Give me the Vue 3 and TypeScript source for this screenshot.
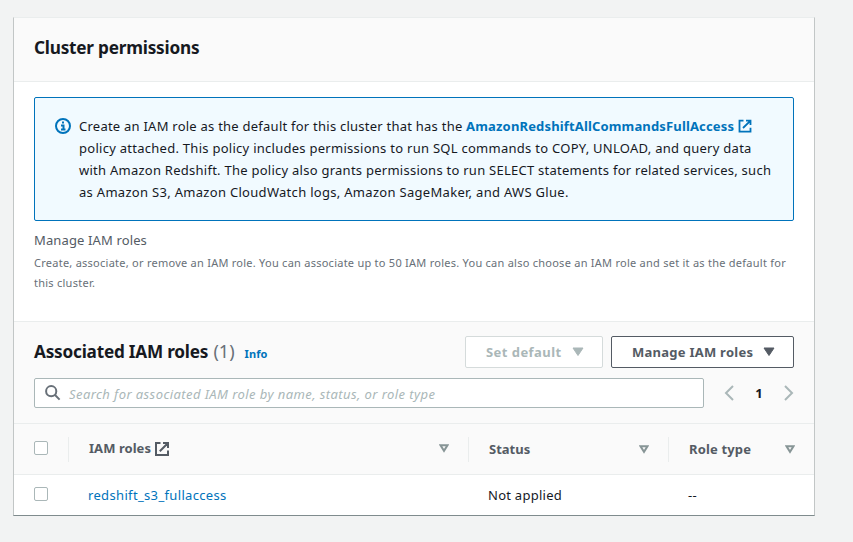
<script setup lang="ts">
import { ref } from 'vue'

interface Role {
  name: string
  status: string
  type: string
}

const roles: Role[] = [{ name: 'redshift_s3_fullaccess', status: 'Not applied', type: '--' }]
const query = ref('')
const page = ref(1)
</script>

<template>
  <main class="card">
    <header class="card-header">
      <h2 class="title">Cluster permissions</h2>
    </header>

    <section class="body">
      <div class="alert">
        <svg class="info-icon" width="16" height="16" viewBox="0 0 16 16" fill="none" stroke="#0073bb" stroke-width="2">
          <circle cx="8" cy="8" r="7" />
          <path d="M6 7.5h2.5V12M6 11.5h4.5M7 4.5h2" />
        </svg>
        <p class="alert-text">
          <span class="line l1">Create an IAM role as the default for this cluster that has the <a class="policy">AmazonRedshiftAllCommandsFullAccess</a><svg class="ext" width="14" height="14" viewBox="0 0 14 14" fill="none" stroke="currentColor" stroke-width="1.8"><path d="M5.5 1.6H1.5v11h11V8.8M8 1.6h4.5v4.5M12.3 1.8 5 9" /></svg></span>
          <span class="line l2">policy attached. This policy includes permissions to run SQL commands to COPY, UNLOAD, and query data</span>
          <span class="line l3">with Amazon Redshift. The policy also grants permissions to run SELECT statements for related services, such</span>
          <span class="line l4">as Amazon S3, Amazon CloudWatch logs, Amazon SageMaker, and AWS Glue.</span>
        </p>
      </div>
      <div class="label">Manage IAM roles</div>
      <p class="description">
        Create, associate, or remove an IAM role. You can associate up to 50 IAM roles. You can also choose an IAM role and set it as the default for<br />this cluster.
      </p>
    </section>

    <section class="toolbar">
      <div class="heading-row">
        <h2 class="title roles-title">Associated IAM roles <span class="count">(1)</span></h2>
        <a class="info">Info</a>
        <div class="actions">
          <button class="btn set" disabled>
            <span>Set default</span>
            <svg width="12" height="10" viewBox="0 0 12 10"><path d="M1 1h10L6 8.5z" fill="currentColor" stroke="currentColor" stroke-linejoin="round" /></svg>
          </button>
          <button class="btn manage">
            <span>Manage IAM roles</span>
            <svg width="12" height="10" viewBox="0 0 12 10"><path d="M1 1h10L6 8.5z" fill="currentColor" stroke="currentColor" stroke-linejoin="round" /></svg>
          </button>
        </div>
      </div>
      <div class="search-row">
        <label class="search">
          <svg width="16" height="16" viewBox="0 0 16 16" fill="none" stroke="#687078" stroke-width="2">
            <circle cx="6.2" cy="6.2" r="5.1" />
            <path d="m9.8 9.8 4.8 4.8" />
          </svg>
          <input v-model="query" placeholder="Search for associated IAM role by name, status, or role type" />
        </label>
        <nav class="pager">
          <svg width="10" height="16" viewBox="0 0 10 16" fill="none" stroke="#aab7b8" stroke-width="2"><path d="M9 1 2 8l7 7" /></svg>
          <span>{{ page }}</span>
          <svg width="10" height="16" viewBox="0 0 10 16" fill="none" stroke="#aab7b8" stroke-width="2"><path d="m1 1 7 7-7 7" /></svg>
        </nav>
      </div>
    </section>

    <div class="grid head">
      <div class="cell check"><span class="box"></span></div>
      <div class="cell first">
        <span class="roles-label">IAM roles</span>
        <svg class="ext-head" width="14" height="14" viewBox="0 0 14 14" fill="none" stroke="currentColor" stroke-width="2"><path d="M5.5 1H1v12h12V8.5M8 1h5v5M13 1 4.8 9.2" /></svg>
        <svg class="sort" width="10" height="9" viewBox="0 0 10 9"><path d="M1.5 1.2h7L5 6.8z" fill="none" stroke="#879596" stroke-width="2" /></svg>
      </div>
      <div class="cell second">
        <span>Status</span>
        <svg class="sort" width="10" height="9" viewBox="0 0 10 9"><path d="M1.5 1.2h7L5 6.8z" fill="none" stroke="#879596" stroke-width="2" /></svg>
      </div>
      <div class="cell third">
        <span class="type-label">Role type</span>
        <svg class="sort" width="10" height="9" viewBox="0 0 10 9"><path d="M1.5 1.2h7L5 6.8z" fill="none" stroke="#879596" stroke-width="2" /></svg>
      </div>
    </div>
    <div v-for="role in roles" :key="role.name" class="grid row">
      <div class="cell check"><span class="box"></span></div>
      <div class="cell"><a class="role-link">{{ role.name }}</a></div>
      <div class="cell">{{ role.status }}</div>
      <div class="cell">{{ role.type }}</div>
    </div>
  </main>
</template>

<style>
body {
  background: #f2f3f3;
}
</style>

<style scoped>
* {
  box-sizing: border-box;
}
.card {
  width: 802px;
  margin: 17px 0 0 13px;
  border: 1px solid #c2c6c6;
  border-top-color: #eaeded;
  border-bottom-color: #7f8b8d;
  background: #fff;
  color: #16191f;
  font: 13px/22px 'Noto Sans', sans-serif;
  box-shadow: 0 1px 0 #d5dada;
}
svg {
  flex: none;
  display: block;
}
.title {
  margin: 0;
  font-size: 17.2px;
  font-weight: 700;
  letter-spacing: -0.22px;
  white-space: pre;
}
.card-header {
  height: 64px;
  padding: 19px 20px 0;
  background: #fafafa;
  border-bottom: 1px solid #eaeded;
}
.body {
  height: 239px;
  padding: 15px 20px 0;
}
.alert {
  display: flex;
  height: 124px;
  padding: 17px 20px;
  border: 1px solid #0073bb;
  border-radius: 2px;
  background: #f1faff;
}
.info-icon {
  margin: 3px 8px 0 0;
}
.alert-text {
  margin: 0;
  white-space: nowrap;
}
.line {
  display: block;
  height: 22px;
}
.l1 {
  display: flex;
  white-space: pre;
  letter-spacing: 0.24px;
}
.l2 {
  letter-spacing: 0.27px;
}
.l3 {
  letter-spacing: 0.254px;
}
.l4 {
  letter-spacing: 0.3px;
}
.policy {
  font-weight: 700;
  color: #0073bb;
  letter-spacing: 0.155px;
}
.ext {
  margin: 4px 0 0 4px;
  color: #0073bb;
}
.label {
  margin-top: 8px;
  color: #545b64;
  letter-spacing: 0.13px;
}
.description {
  margin: 2px 0 0;
  font-size: 11px;
  line-height: 20px;
  letter-spacing: 0.253px;
  color: #687078;
  white-space: nowrap;
}
.toolbar {
  height: 103px;
  padding: 14px 20px 0;
  background: #fafafa;
  border-top: 1px solid #eaeded;
  border-bottom: 1px solid #eaeded;
}
.heading-row {
  display: flex;
  align-items: center;
  height: 32px;
}
.roles-title {
  margin-bottom: 2px;
}
.count {
  margin-left: 1px;
  font-size: 18px;
  font-weight: 400;
  color: #687078;
  letter-spacing: 0;
}
.info {
  margin: 4px 0 0 10px;
  font-size: 11px;
  font-weight: 700;
  color: #0073bb;
  letter-spacing: 0.1px;
}
.actions {
  display: flex;
  gap: 8px;
  margin-left: auto;
}
.btn {
  display: flex;
  align-items: center;
  justify-content: space-between;
  height: 32px;
  padding: 0 18px 0 20px;
  border: 1px solid #545b64;
  border-radius: 2px;
  background: #fff;
  font: 700 13px/22px 'Noto Sans', sans-serif;
  color: #545b64;
}
.set {
  width: 138px;
  border-color: #d5dbdb;
  color: #aab7b8;
  letter-spacing: 0.45px;
}
.manage {
  width: 183px;
  letter-spacing: 0.25px;
}
.search-row {
  display: flex;
  align-items: center;
  justify-content: space-between;
  margin-top: 10px;
}
.search {
  display: flex;
  align-items: center;
  gap: 8px;
  width: 670px;
  height: 30px;
  padding: 0 10px;
  border: 1px solid #aab7b8;
  border-radius: 2px;
  background: #fff;
}
.search input {
  flex: 1;
  height: 22px;
  margin-top: 2px;
  padding: 0;
  border: 0;
  outline: 0;
  background: none;
  font: 13px/22px 'Noto Sans', sans-serif;
  letter-spacing: 0.42px;
}
.search input::placeholder {
  color: #aab7b8;
  font-style: italic;
}
.pager {
  display: flex;
  align-items: center;
  justify-content: space-between;
  width: 70px;
  font-weight: 700;
}
.grid {
  display: grid;
  grid-template-columns: 54px 400px 200px 146px;
  align-items: center;
}
.head {
  height: 51px;
  background: #fafafa;
  border-bottom: 1px solid #eaeded;
  font-weight: 700;
  color: #545b64;
}
.row {
  height: 40px;
}
.cell {
  display: flex;
  align-items: center;
  padding-left: 20px;
  letter-spacing: 0.26px;
}
.head .cell {
  height: 25px;
  letter-spacing: 0;
}
.head .cell + .cell {
  border-left: 1px solid #eaeded;
}
.head .sort {
  margin-left: auto;
}
.first .sort,
.second .sort {
  margin-right: 19px;
}
.third .sort {
  margin-right: 19px;
}
.ext-head {
  margin: 1px 0 0 4px;
}
.head .check,
.head .first,
.row .check {
  padding-bottom: 2px;
}
.roles-label {
  letter-spacing: 0.05px;
}
.type-label {
  letter-spacing: 0.15px;
}
.box {
  width: 14px;
  height: 14px;
  border: 1px solid #aab7b8;
  border-radius: 2px;
  background: #fff;
}
.role-link {
  color: #0073bb;
  letter-spacing: 0.34px;
}
</style>
